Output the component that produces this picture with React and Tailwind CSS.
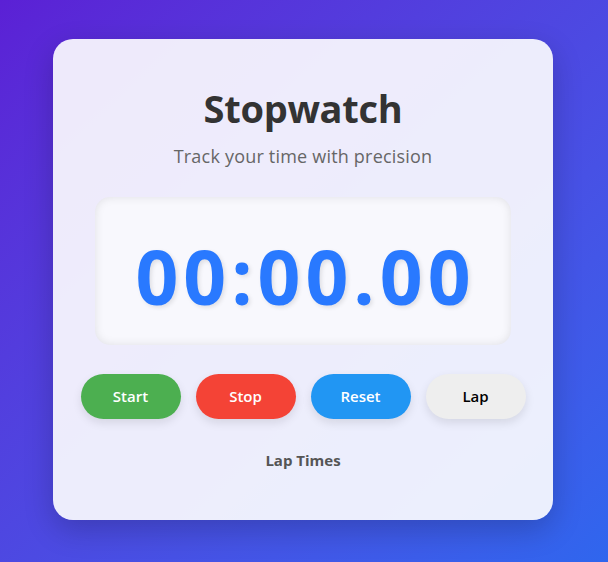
import { useEffect, useRef, useState } from 'react';

function fmt(ms) {
  const m = Math.floor(ms / 60000);
  const s = Math.floor((ms % 60000) / 1000);
  const cs = Math.floor((ms % 1000) / 10);
  const pad = (n) => String(n).padStart(2, '0');
  return `${pad(m)}:${pad(s)}.${pad(cs)}`;
}

export default function App() {
  const [elapsed, setElapsed] = useState(0);
  const [running, setRunning] = useState(false);
  const [laps, setLaps] = useState([]);
  const startRef = useRef(0);

  useEffect(() => {
    if (!running) return;
    startRef.current = Date.now() - elapsed;
    const t = setInterval(() => setElapsed(Date.now() - startRef.current), 10);
    return () => clearInterval(t);
  }, [running]);

  const btn =
    'h-[45px] w-[100px] rounded-full text-[15px] font-semibold shadow-[0_4px_10px_rgba(0,0,0,0.1)]';

  return (
    <div
      className="flex min-h-[562px] w-full items-center justify-center bg-gradient-to-br from-[#5b20d5] to-[#2f66ee] pb-[3px] pr-[2px]"
      style={{ fontFamily: '"Open Sans", "Noto Sans", sans-serif' }}
    >
      <div className="flex h-[481px] w-[500px] flex-col items-center rounded-[20px] bg-white/90 px-[42px] pt-[44px] shadow-[0_10px_30px_rgba(0,0,0,0.2)]">
        <h1 className="text-[38px] font-bold leading-[50px] tracking-[-0.3px] text-[#333]">Stopwatch</h1>
        <p className="mt-[11px] text-[18px] font-medium leading-[24px] tracking-[0.2px] text-[#666]">
          Track your time with precision
        </p>

        <div className="mt-[29px] flex h-[148px] w-full shrink-0 items-center justify-center rounded-[15px] bg-[#f8f8fd] pt-[11px] shadow-[inset_0_0_10px_rgba(0,0,0,0.1)]">
          <span className="pl-[5px] text-[75px] font-bold leading-none tracking-[5px] text-[#2979ff] [text-shadow:2px_2px_4px_rgba(0,0,0,0.1)]">
            {fmt(elapsed)}
          </span>
        </div>

        <div className="mt-[29px] flex gap-[15px]">
          <button className={`${btn} bg-[#4caf50] text-white`} onClick={() => setRunning(true)}>Start</button>
          <button className={`${btn} bg-[#f44336] text-white`} onClick={() => setRunning(false)}>Stop</button>
          <button
            className={`${btn} bg-[#2196f3] text-white`}
            onClick={() => {
              setRunning(false);
              setElapsed(0);
              setLaps([]);
            }}
          >
            Reset
          </button>
          <button className={`${btn} bg-[#eeeeee] text-black`} onClick={() => running && setLaps([...laps, elapsed])}>
            Lap
          </button>
        </div>

        <h2 className="mt-[30px] text-[15px] font-bold text-[#555]">Lap Times</h2>
        <ul className="mt-2 text-sm text-[#555]">
          {laps.map((l, i) => (
            <li key={i}>
              Lap {i + 1}: {fmt(l)}
            </li>
          ))}
        </ul>
      </div>
    </div>
  );
}
